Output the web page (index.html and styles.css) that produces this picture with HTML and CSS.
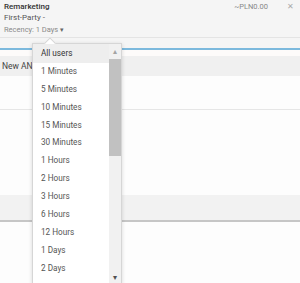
FILE: index.html
```html
<!DOCTYPE html>
<html lang="en">
<head>
    <meta charset="utf-8">
    <title>Remarketing</title>
    <link rel="stylesheet" href="styles.css">
</head>
<body>
    <div class="header">
        <div class="header-left">
            <div class="title">Remarketing</div>
            <div class="party">First-Party -</div>
            <div class="recency">Recency: 1 Days <span class="caret">&#9662;</span></div>
        </div>
        <div class="header-right">
            <span class="cost">~PLN0.00</span>
            <span class="close">&#10005;</span>
        </div>
    </div>
    <div class="strip"></div>
    <div class="gap"></div>
    <div class="row-new">New AND</div>
    <div class="blank"></div>
    <div class="blank tall"></div>
    <div class="band"></div>

    <div class="dropdown">
        <div class="notch"></div>
        <div class="list">
            <div class="item active">All users</div>
            <div class="item">1 Minutes</div>
            <div class="item">5 Minutes</div>
            <div class="item">10 Minutes</div>
            <div class="item">15 Minutes</div>
            <div class="item">30 Minutes</div>
            <div class="item">1 Hours</div>
            <div class="item">2 Hours</div>
            <div class="item">3 Hours</div>
            <div class="item">6 Hours</div>
            <div class="item">12 Hours</div>
            <div class="item">1 Days</div>
            <div class="item">2 Days</div>
        </div>
        <div class="scrollbar">
            <div class="arrow up">&#9652;</div>
            <div class="thumb"></div>
            <div class="track"></div>
            <div class="arrow down">&#9662;</div>
        </div>
    </div>
</body>
</html>
```
FILE: styles.css
```css
body {
    margin: 0;
    width: 300px;
    height: 283px;
    overflow: hidden;
    background-color: #fdfdfd;
    font-family: Roboto, Arial, sans-serif;
    position: relative;
}
.header {
    display: flex;
    justify-content: space-between;
    height: 38px;
    padding: 1px 4px 0 4px;
    box-sizing: border-box;
    background-color: #f5f5f5;
    border-bottom: 1px solid #e4e4e4;
}
.title {
    font-size: 8px;
    font-weight: 500;
    color: #333;
    line-height: 11px;
}
.party {
    font-size: 8px;
    color: #555;
    line-height: 11px;
    margin-top: 0;
}
.recency {
    font-size: 7.5px;
    color: #8a8a8a;
    line-height: 11px;
    margin-top: 1px;
}
.caret {
    font-size: 7px;
    color: #666;
}
.header-right {
    display: flex;
    gap: 19px;
    font-size: 7.5px;
    color: #888;
    line-height: 11px;
    padding-right: 2px;
}
.close {
    font-size: 8px;
    color: #aaa;
}
.strip {
    height: 10px;
    background-color: #f5f5f5;
    border-bottom: 2px solid #7cb9dd;
}
.gap {
    height: 6px;
    background-color: #fdfbfa;
}
.row-new {
    height: 20px;
    line-height: 20px;
    padding-left: 2px;
    font-size: 8.5px;
    color: #444;
    background-color: #f0f0f0;
}
.blank {
    height: 33px;
    background-color: #fdfdfd;
    border-bottom: 1px solid #e6e6e6;
}
.blank.tall {
    height: 85px;
    border-bottom: none;
}
.band {
    height: 25px;
    background-color: #f2f2f2;
    border-bottom: 2px solid #c6c6c6;
}
.dropdown {
    position: absolute;
    left: 32px;
    top: 43px;
    width: 88px;
    height: 240px;
    display: flex;
    background-color: #fff;
    border: 1px solid #d6d6d6;
    border-bottom: none;
    box-shadow: 0 1px 4px rgba(0, 0, 0, 0.15);
}
.notch {
    position: absolute;
    left: 13px;
    top: -5px;
    width: 7px;
    height: 7px;
    background-color: #fff;
    border-left: 1px solid #d6d6d6;
    border-top: 1px solid #d6d6d6;
    transform: rotate(45deg);
}
.list {
    flex: 1;
    position: relative;
    padding-top: 1px;
}
.item {
    height: 17.9px;
    line-height: 17.9px;
    padding-left: 8px;
    font-size: 8.2px;
    color: #555;
}
.item.active {
    background-color: #eeeeee;
    color: #333;
    margin-top: -1px;
    padding-top: 1px;
}
.scrollbar {
    width: 12px;
    display: flex;
    flex-direction: column;
    background-color: #f1f1f1;
    position: relative;
}
.arrow {
    height: 15px;
    line-height: 15px;
    text-align: center;
    font-size: 8px;
    color: #a3a3a3;
}
.arrow.down {
    height: 14px;
    color: #505050;
}
.thumb {
    height: 97px;
    background-color: #c1c1c1;
}
.track {
    flex: 1;
}
```
